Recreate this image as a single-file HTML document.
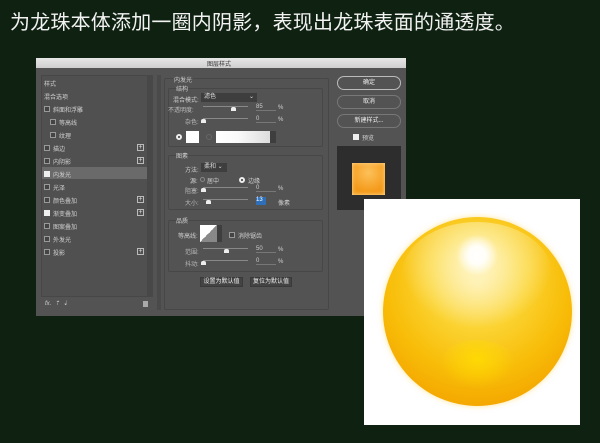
<!DOCTYPE html>
<html><head><meta charset="utf-8"><style>
*{margin:0;padding:0;box-sizing:border-box}
body{width:600px;height:443px;overflow:hidden;background:#0f2212;position:relative;font-family:"Liberation Sans","Noto Sans CJK SC",sans-serif;color:#ddd}
.a{position:absolute}
.t{font-size:6px;color:#d0d0d0;white-space:nowrap}
.cb{position:absolute;width:6px;height:6px;border:1px solid #999;background:#444}
.ck{background:#eee;border-color:#eee}
.plus{position:absolute;width:7px;height:7px;border:1px solid #bbb;font-size:7px;line-height:5px;text-align:center;color:#ddd}
.box{position:absolute;border:1px solid #474747;border-radius:2px}
.sl{position:absolute;height:1px;background:#888}
.field{position:absolute;border-bottom:1px solid #777;font-size:6px;color:#ccc}
.btn{position:absolute;border:1px solid #999;border-radius:7px;font-size:6px;text-align:center;color:#eee}
.sb{position:absolute;background:#434343;border:1px solid #3a3a3a;font-size:6px;color:#eee;text-align:center;line-height:9px}
</style></head><body>
<div class="a" style="left:10px;top:6px;font-size:20px;color:#f2f2f2;letter-spacing:0.2px;font-family:'Noto Sans CJK SC',sans-serif">为龙珠本体添加一圈内阴影，表现出龙珠表面的通透度。</div>

<div class="a" style="left:36px;top:58px;width:370px;height:258px;background:#535353"></div>
<div class="a" style="left:36px;top:58px;width:370px;height:10px;background:linear-gradient(#e6e6e6,#cfcfcf)"></div>
<div class="a t" style="left:207px;top:59px;color:#333">图层样式</div>

<div class="a" style="left:41px;top:75px;width:107px;height:222px;background:#505050;border:1px solid #474747"></div>
<div class="a" style="left:148px;top:75px;width:5px;height:222px;background:#484848"></div>
<div class="a" style="left:42px;top:167px;width:105px;height:12px;background:#6a6a6a"></div>
<div class="a t" style="left:44px;top:79px">样式</div>
<div class="a t" style="left:44px;top:92px">混合选项</div>
<div class="cb" style="left:44px;top:106px"></div><div class="a t" style="left:53px;top:105px">斜面和浮雕</div>
<div class="cb" style="left:50px;top:119px"></div><div class="a t" style="left:59px;top:118px">等高线</div>
<div class="cb" style="left:50px;top:132px"></div><div class="a t" style="left:59px;top:131px">纹理</div>
<div class="cb" style="left:44px;top:145px"></div><div class="a t" style="left:53px;top:144px">描边</div><div class="plus" style="left:137px;top:144px">+</div>
<div class="cb" style="left:44px;top:158px"></div><div class="a t" style="left:53px;top:157px">内阴影</div><div class="plus" style="left:137px;top:157px">+</div>
<div class="cb ck" style="left:44px;top:171px"></div><div class="a t" style="left:53px;top:170px">内发光</div>
<div class="cb" style="left:44px;top:184px"></div><div class="a t" style="left:53px;top:183px">光泽</div>
<div class="cb" style="left:44px;top:197px"></div><div class="a t" style="left:53px;top:196px">颜色叠加</div><div class="plus" style="left:137px;top:196px">+</div>
<div class="cb ck" style="left:44px;top:210px"></div><div class="a t" style="left:53px;top:209px">渐变叠加</div><div class="plus" style="left:137px;top:209px">+</div>
<div class="cb" style="left:44px;top:223px"></div><div class="a t" style="left:53px;top:222px">图案叠加</div>
<div class="cb" style="left:44px;top:236px"></div><div class="a t" style="left:53px;top:235px">外发光</div>
<div class="cb" style="left:44px;top:249px"></div><div class="a t" style="left:53px;top:248px">投影</div><div class="plus" style="left:137px;top:248px">+</div>
<div class="a t" style="left:45px;top:300px;font-style:italic">fx. &nbsp;⇡ &nbsp;⇣</div>
<div class="a" style="left:143px;top:301px;width:5px;height:6px;background:#aaa"></div>

<div class="a" style="left:157px;top:75px;width:4px;height:235px;background:#4a4a4a"></div>
<div class="box" style="left:164px;top:78px;width:165px;height:232px"></div>
<div class="a t" style="left:173px;top:75px;background:#535353;padding:0 1px">内发光</div>
<div class="box" style="left:168px;top:88px;width:155px;height:59px"></div>
<div class="a t" style="left:176px;top:84px;background:#535353">结构</div>
<div class="a t" style="left:173px;top:95px">混合模式:</div>
<div class="a" style="left:201px;top:93px;width:56px;height:9px;background:#3e3e3e;font-size:6px;padding-left:3px;line-height:9px">滤色 <span style="float:right;padding-right:3px">⌄</span></div>
<div class="a t" style="left:168px;top:105px;color:#bbb">不透明度:</div>
<div class="sl" style="left:203px;top:106px;width:45px"></div>
<div class="a" style="left:231px;top:107px;width:5px;height:4px;background:#eee;border-radius:2px 2px 0 0"></div>
<div class="field" style="left:256px;top:104px;width:20px">85</div><div class="a t" style="left:278px;top:105px">%</div>
<div class="a t" style="left:185px;top:117px;color:#bbb">杂色:</div>
<div class="sl" style="left:203px;top:118px;width:45px"></div>
<div class="a" style="left:201px;top:119px;width:5px;height:4px;background:#eee;border-radius:2px 2px 0 0"></div>
<div class="field" style="left:256px;top:116px;width:20px">0</div><div class="a t" style="left:278px;top:117px">%</div>
<div class="a" style="left:176px;top:134px;width:6px;height:6px;border-radius:50%;border:2px solid #eee;background:#333"></div>
<div class="a" style="left:186px;top:131px;width:13px;height:12px;background:#fff"></div>
<div class="a" style="left:206px;top:134px;width:6px;height:6px;border-radius:50%;border:1px solid #666"></div>
<div class="a" style="left:216px;top:131px;width:54px;height:12px;background:linear-gradient(90deg,#fff,#fafafa 40%,#ddd)"></div>
<div class="a" style="left:270px;top:131px;width:6px;height:12px;background:#3e3e3e"></div>

<div class="box" style="left:168px;top:155px;width:155px;height:55px"></div>
<div class="a t" style="left:176px;top:151px;background:#535353">图素</div>
<div class="a t" style="left:185px;top:165px">方法:</div>
<div class="a" style="left:201px;top:163px;width:26px;height:9px;background:#3e3e3e;font-size:6px;padding-left:3px;line-height:9px">柔和 ⌄</div>
<div class="a t" style="left:190px;top:176px">源:</div>
<div class="a" style="left:200px;top:177px;width:5px;height:5px;border-radius:50%;border:1px solid #888"></div>
<div class="a t" style="left:207px;top:176px">居中</div>
<div class="a" style="left:239px;top:177px;width:6px;height:6px;border-radius:50%;border:2px solid #eee;background:#333"></div>
<div class="a t" style="left:248px;top:176px">边缘</div>
<div class="a t" style="left:185px;top:186px;color:#bbb">阻塞:</div>
<div class="sl" style="left:203px;top:187px;width:45px"></div>
<div class="a" style="left:201px;top:188px;width:5px;height:4px;background:#eee;border-radius:2px 2px 0 0"></div>
<div class="field" style="left:256px;top:185px;width:20px">0</div><div class="a t" style="left:278px;top:186px">%</div>
<div class="a t" style="left:185px;top:198px;color:#bbb">大小:</div>
<div class="sl" style="left:203px;top:199px;width:45px"></div>
<div class="a" style="left:206px;top:200px;width:5px;height:4px;background:#eee;border-radius:2px 2px 0 0"></div>
<div class="a" style="left:256px;top:197px;width:10px;height:8px;background:#2f6fb8;font-size:6px;color:#fff">13</div>
<div class="a t" style="left:278px;top:198px">像素</div>

<div class="box" style="left:168px;top:220px;width:155px;height:52px"></div>
<div class="a t" style="left:176px;top:216px;background:#535353">品质</div>
<div class="a t" style="left:178px;top:231px">等高线:</div>
<div class="a" style="left:200px;top:225px;width:17px;height:17px;background:linear-gradient(135deg,#fff 50%,#888 50%)"></div>
<div class="a" style="left:217px;top:225px;width:5px;height:17px;background:#3e3e3e"></div>
<div class="cb" style="left:229px;top:232px"></div><div class="a t" style="left:238px;top:231px">消除锯齿</div>
<div class="a t" style="left:185px;top:247px;color:#bbb">范围:</div>
<div class="sl" style="left:203px;top:248px;width:45px"></div>
<div class="a" style="left:224px;top:249px;width:5px;height:4px;background:#eee;border-radius:2px 2px 0 0"></div>
<div class="field" style="left:256px;top:246px;width:20px">50</div><div class="a t" style="left:278px;top:247px">%</div>
<div class="a t" style="left:185px;top:259px;color:#bbb">抖动:</div>
<div class="sl" style="left:203px;top:260px;width:45px"></div>
<div class="a" style="left:201px;top:261px;width:5px;height:4px;background:#eee;border-radius:2px 2px 0 0"></div>
<div class="field" style="left:256px;top:258px;width:20px">0</div><div class="a t" style="left:278px;top:259px">%</div>
<div class="sb" style="left:200px;top:277px;width:43px;height:10px">设置为默认值</div>
<div class="sb" style="left:250px;top:277px;width:42px;height:10px">复位为默认值</div>

<div class="btn" style="left:337px;top:76px;width:64px;height:14px;line-height:12px;border-color:#bbb">确定</div>
<div class="btn" style="left:337px;top:95px;width:64px;height:14px;line-height:12px;border-color:#777">取消</div>
<div class="btn" style="left:337px;top:114px;width:64px;height:14px;line-height:12px;border-color:#777">新建样式...</div>
<div class="cb ck" style="left:353px;top:134px"></div><div class="a t" style="left:362px;top:133px">预览</div>
<div class="a" style="left:337px;top:146px;width:64px;height:64px;background:#2d2d2d"></div>
<div class="a" style="left:352px;top:163px;width:33px;height:32px;background:radial-gradient(circle at 50% 30%,#fdc15a,#f49a1a 70%);box-shadow:inset 0 0 4px #ffe0a0"></div>

<div class="a" style="left:364px;top:199px;width:216px;height:226px;background:#fff"></div>
<div class="a" style="left:383px;top:217px;width:189px;height:189px;border-radius:50%;background:radial-gradient(circle at 50% 35%,#fde58a 0,#fbd332 30%,#f8bd08 58%,#f4a500 82%,#f6b000 94%,#fcd03a 100%);box-shadow:0 0 6px rgba(255,210,80,.6)"></div>
<div class="a" style="left:402px;top:222px;width:150px;height:105px;border-radius:50%;background:radial-gradient(ellipse at 50% 35%,rgba(255,255,235,.75),rgba(255,250,200,.3) 50%,rgba(255,240,150,0) 72%)"></div>
<div class="a" style="left:455px;top:235px;width:44px;height:40px;border-radius:50%;background:radial-gradient(circle,#fff 0,rgba(255,255,255,.9) 30%,rgba(255,255,255,0) 70%)"></div>
<div class="a" style="left:440px;top:340px;width:75px;height:48px;border-radius:50%;background:radial-gradient(ellipse at 50% 40%,rgba(255,220,0,.85),rgba(255,210,0,0) 70%)"></div>
</body></html>
